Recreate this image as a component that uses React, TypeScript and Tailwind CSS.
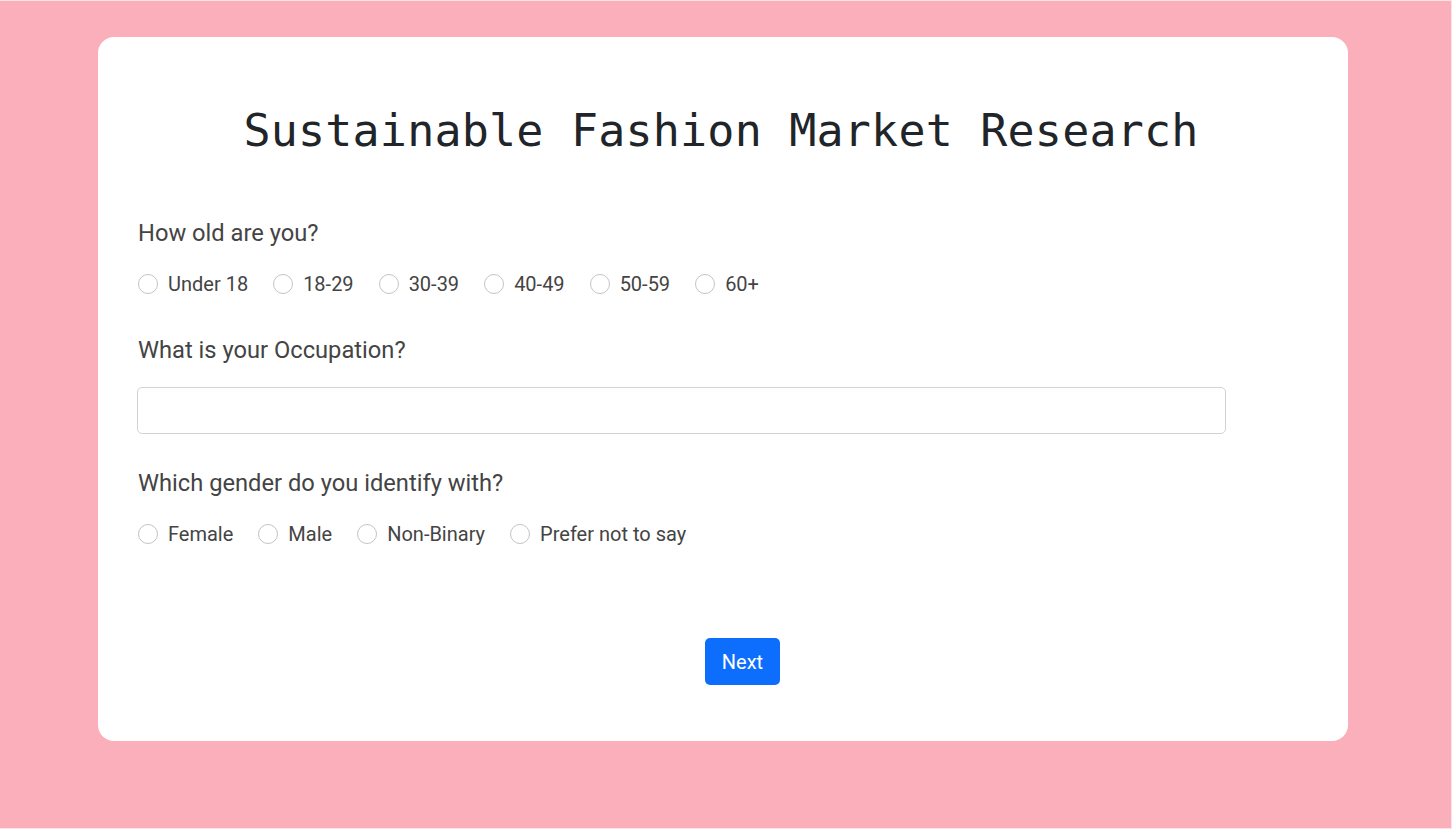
import React from "react";

function Radio({ label }: { label: string }) {
  return (
    <label className="flex items-center gap-[10px] h-[24px]">
      <span className="w-[20px] h-[20px] rounded-full border border-[#c4c4c4] bg-white shrink-0" />
      <span className="text-[20px] leading-[24px] text-[#444444]">{label}</span>
    </label>
  );
}

export default function App() {
  const ages = ["Under 18", "18-29", "30-39", "40-49", "50-59", "60+"];
  const genders = ["Female", "Male", "Non-Binary", "Prefer not to say"];
  return (
    <div
      className="w-[1452px] h-[829px] bg-[#fbafbb] border-t border-b border-r border-[#fde2e6] pt-[36px] pl-[98px] overflow-hidden"
      style={{ fontFamily: "Roboto, 'Liberation Sans', sans-serif" }}
    >
      <div className="w-[1250px] h-[704px] bg-white rounded-[16px] pt-[71px] pl-[40px]">
        <h1
          className="text-center text-[45px] leading-[45px] text-[#212529] pr-[44px] tracking-[0.2px]"
          style={{ fontFamily: "'DejaVu Sans Mono', 'Liberation Mono', monospace" }}
        >
          Sustainable Fashion Market Research
        </h1>

        <div className="mt-[66px] text-[23.7px] leading-[29px] text-[#444444]">How old are you?</div>
        <div className="mt-[24px] flex gap-[25px]">
          {ages.map((a) => (
            <Radio key={a} label={a} />
          ))}
        </div>

        <div className="mt-[40px] text-[23.7px] leading-[29px] text-[#444444]">What is your Occupation?</div>
        <div className="mt-[22px] -ml-[1px] w-[1089px] h-[47px] border border-[#ced4da] rounded-[5px] bg-white" />

        <div className="mt-[35px] text-[23.7px] leading-[29px] text-[#444444]">Which gender do you identify with?</div>
        <div className="mt-[24px] flex gap-[25px]">
          {genders.map((g) => (
            <Radio key={g} label={g} />
          ))}
        </div>

        <div className="mt-[92px] pl-[567px]">
          <button className="w-[75px] h-[47px] rounded-[5px] bg-[#0d6efd] text-white text-[20px]">
            Next
          </button>
        </div>
      </div>
    </div>
  );
}
